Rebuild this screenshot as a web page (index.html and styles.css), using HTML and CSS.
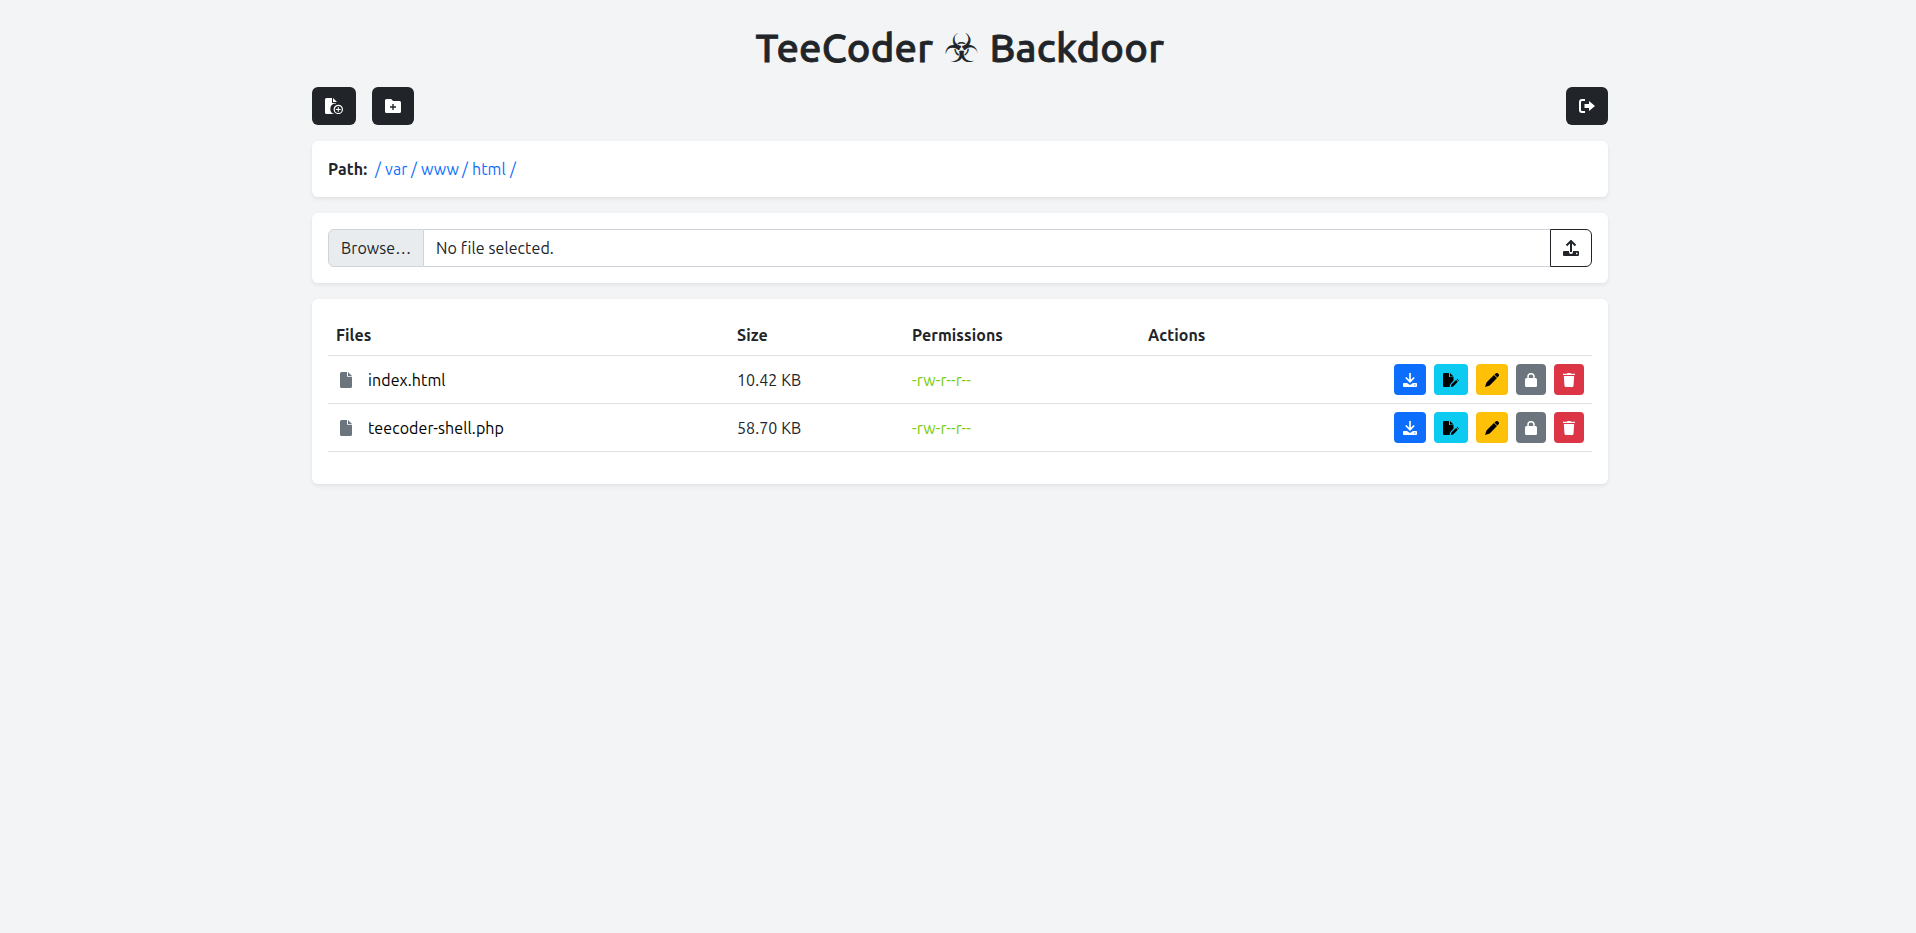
FILE: index.html
```
<!DOCTYPE html>
<html lang="en">
<head>
<meta charset="utf-8">
<title>File manager</title>
<link rel="stylesheet" href="styles.css">
</head>
<body>
<svg class="defs" width="0" height="0">
  <symbol id="file" viewBox="0 0 12 16"><path d="M1.600 0H7v4.800h5v9.600a1.600 1.600 0 0 1-1.600 1.600H1.600A1.600 1.600 0 0 1 0 14.400V1.600A1.600 1.600 0 0 1 1.600 0zM8 0l4 4H8z"/></symbol>
  <symbol id="file-plus" viewBox="0 0 18 16"><path d="M1.500 0H7v5h4v.4A5.400 5.400 0 0 0 9.300 16H1.500A1.500 1.500 0 0 1 0 14.500v-13A1.500 1.500 0 0 1 1.500 0zM8 0l4 4H8z"/><circle cx="13.300" cy="11.400" r="4.100" fill="none" stroke="currentColor" stroke-width="1.200"/><path d="M12.800 9h1v1.900h1.900v1h-1.900v1.900h-1v-1.900h-1.900v-1h1.900z"/></symbol>
  <symbol id="folder-plus" viewBox="0 0 16 14"><path fill-rule="evenodd" d="M1.500 0h4.600l2 2h6.400A1.500 1.500 0 0 1 16 3.500v9a1.500 1.500 0 0 1-1.500 1.500h-13A1.500 1.500 0 0 1 0 12.500v-11A1.500 1.500 0 0 1 1.500 0zM7.300 5v2.300H5v1.400h2.300V11h1.400V8.700H11V7.300H8.700V5z"/></symbol>
  <symbol id="exit" viewBox="0 0 16 14"><path d="M6 1H3a2 2 0 0 0-2 2v8a2 2 0 0 0 2 2h3" fill="none" stroke="currentColor" stroke-width="2"/><path d="M5.500 5H10V2l6 5-6 5V9H5.500z"/></symbol>
  <symbol id="upload" viewBox="0 0 16 16"><path d="M8 12V1.500M3.500 5.500L8 1l4.500 4.500" fill="none" stroke="currentColor" stroke-width="2"/><path fill-rule="evenodd" d="M1 11h5v1a2 2 0 0 0 4 0v-1h5a1 1 0 0 1 1 1v3a1 1 0 0 1-1 1H1a1 1 0 0 1-1-1v-3a1 1 0 0 1 1-1zm12 1.800v1.400h1.400v-1.400z"/></symbol>
  <symbol id="download" viewBox="0 0 14 14"><path d="M7 0v8M2.800 4.500L7 8.700l4.200-4.200" fill="none" stroke="currentColor" stroke-width="1.700"/><path fill-rule="evenodd" d="M.8 10h3.200L7 12l3-2h3.200a.8.8 0 0 1 .8.8v2.400a.8.8 0 0 1-.8.8H.8a.8.8 0 0 1-.8-.8v-2.400a.8.8 0 0 1 .8-.8zm10.500 1.600v1h1.200v-1z"/></symbol>
  <symbol id="file-edit" viewBox="0 0 16 14"><path d="M1.300 0H6v4h4.500v3.500L7.300 11l-.8 3H1.300A1.300 1.300 0 0 1 0 12.700V1.300A1.300 1.300 0 0 1 1.300 0zM7 0l3.500 3.500H7zM13.700 6.300l.6-.5 1.600 1.600-.6.600zM13 7l1.800 1.800-4.600 4.600-2.400.5.500-2.400z"/></symbol>
  <symbol id="pencil" viewBox="0 0 14 14"><path d="M10.400.7a2 2 0 0 1 2.900 2.900l-.9.900-3-3zM8.900 2l3.100 3.100-7.300 7.300L0 14l1.500-4.600z"/></symbol>
  <symbol id="lock" viewBox="0 0 12 14"><path d="M3 6V3.800a3 3 0 0 1 6 0V6" fill="none" stroke="currentColor" stroke-width="1.500"/><rect y="5" width="12" height="9" rx="1.500"/></symbol>
  <symbol id="trash" viewBox="0 0 12 14"><path d="M0 .7h4L4.500 0h3l.5.700h4v1.200H0zM.8 3h10.400l-.7 9.800a1.300 1.300 0 0 1-1.300 1.200H2.800a1.300 1.300 0 0 1-1.300-1.200z"/></symbol>
</svg>
<main class="container">
  <h1 class="title"><span class="w1">TeeCoder</span><span class="hazard">☣</span><span class="w2">Backdoor</span></h1>
  <div class="toolbar">
    <button class="btn wide"><svg width="18" height="16"><use href="#file-plus"/></svg></button>
    <button class="btn"><svg width="16" height="14"><use href="#folder-plus"/></svg></button>
    <button class="btn end"><svg width="16" height="14"><use href="#exit"/></svg></button>
  </div>
  <nav class="card path"><b>Path:</b><a class="sl">/</a><a class="var">var</a><a class="sl">/</a><a class="www">www</a><a class="sl">/</a><a class="html">html</a><a class="sl">/</a></nav>
  <div class="card upload">
    <div class="browse"><span>Browse…</span></div>
    <div class="chosen"><span>No file selected.</span></div>
    <button class="send"><svg width="16" height="16"><use href="#upload"/></svg></button>
  </div>
  <section class="card files">
    <div class="row head"><span>Files</span><span>Size</span><span>Permissions</span><span>Actions</span></div>
    <div class="row">
      <span class="name"><svg width="12" height="16"><use href="#file"/></svg><span>index.html</span></span><span>10.42 KB</span><span class="perm">-rw-r--r--</span>
      <span class="actions"><i class="act blue"><svg width="14" height="14"><use href="#download"/></svg></i><i class="act cyan"><svg width="16" height="14"><use href="#file-edit"/></svg></i><i class="act yellow"><svg width="14" height="14"><use href="#pencil"/></svg></i><i class="act gray"><svg width="12" height="14"><use href="#lock"/></svg></i><i class="act red"><svg width="12" height="14"><use href="#trash"/></svg></i></span>
    </div>
    <div class="row">
      <span class="name"><svg width="12" height="16"><use href="#file"/></svg><span>teecoder-shell.php</span></span><span>58.70 KB</span><span class="perm">-rw-r--r--</span>
      <span class="actions"><i class="act blue"><svg width="14" height="14"><use href="#download"/></svg></i><i class="act cyan"><svg width="16" height="14"><use href="#file-edit"/></svg></i><i class="act yellow"><svg width="14" height="14"><use href="#pencil"/></svg></i><i class="act gray"><svg width="12" height="14"><use href="#lock"/></svg></i><i class="act red"><svg width="12" height="14"><use href="#trash"/></svg></i></span>
    </div>
  </section>
</main>
</body>
</html>
```
FILE: styles.css
```
* { box-sizing: border-box; }
body { margin: 0; padding-left: 4px; background: #f2f4f6; color: #212529; font: 16px/24px Ubuntu, "Noto Sans", sans-serif; letter-spacing: .09px; }
svg { display: block; fill: currentColor; }
.defs { position: absolute; }
.container { width: 1296px; margin: 0 auto; padding-top: 24px; }
.title { display: flex; justify-content: center; align-items: center; height: 48px; margin: 0 0 15px; font-size: 40px; line-height: 48px; font-weight: 500; letter-spacing: .2px; white-space: nowrap; -webkit-text-stroke: .8px #212529; }
.w1 { width: 188px; }
.w2 { width: 175px; }
.hazard { width: 46px; font-family: "DejaVu Sans", sans-serif; font-size: 40px; font-weight: 400; -webkit-text-stroke: 0; }
.toolbar { display: flex; gap: 16px; margin-bottom: 16px; }
.btn { display: flex; align-items: center; justify-content: center; width: 42px; height: 38px; padding: 0; border: 0; border-radius: 6px; background: #212529; color: #fff; }
.wide { width: 44px; }
.end { margin-left: auto; }
.card { margin-bottom: 16px; padding: 16px; border-radius: 6px; background: #fff; box-shadow: 0 2px 4px rgba(0, 0, 0, .075); }
.path { display: flex; color: #0d6efd; white-space: nowrap; }
.path b { width: 47px; color: #212529; }
.sl { width: 10px; }
.var { width: 26px; }
.www { width: 41px; }
.html { width: 38px; }
.upload { display: flex; height: 70px; }
.browse { width: 96px; padding: 6px 12px; border: 1px solid #ced4da; border-radius: 6px 0 0 6px; background: #e9ecef; white-space: nowrap; }
.chosen { flex: 1; padding: 6px 12px; border: 1px solid #ced4da; border-width: 1px 0; }
.send { display: flex; align-items: center; justify-content: center; width: 42px; padding: 0; border: 1px solid #212529; border-radius: 0 6px 6px 0; background: #fff; color: #212529; }
.files { height: 185px; }
.row { display: grid; grid-template-columns: 401px 175px 236px 1fr; align-items: center; height: 48px; padding: 0 8px; border-bottom: 1px solid #dee2e6; white-space: nowrap; }
.head { height: 41px; font-weight: 700; }
.name { display: flex; align-items: center; gap: 16px; padding-left: 4px; color: #6c757d; }
.name span { color: #000; }
.perm { color: #7c1; }
.actions { display: flex; justify-content: flex-end; gap: 8px; }
.act { display: flex; align-items: center; justify-content: center; width: 32px; height: 31px; border-radius: 4px; color: #fff; }
.blue { background: #0d6efd; }
.cyan { width: 34px; background: #0dcaf0; color: #000; }
.yellow { background: #ffc107; color: #000; }
.gray { width: 30px; background: #6c757d; }
.red { width: 30px; background: #dc3545; }
```
